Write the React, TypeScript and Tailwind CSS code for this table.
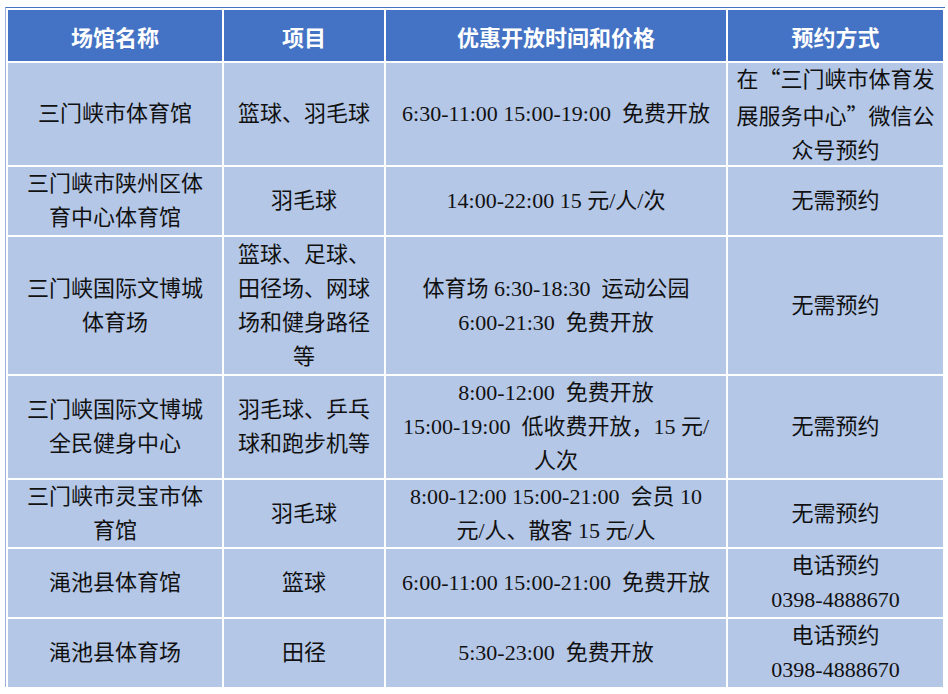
import React from "react";

const Q = ({ children }: { children: React.ReactNode }) => (
  <span className="font-['Noto_Sans_CJK_SC',sans-serif] [font-feature-settings:'fwid']">{children}</span>
);

const H = ({ children }: { children: React.ReactNode }) => (
  <div className="flex items-center justify-center bg-[#4472C4] text-white font-bold text-[22px] leading-[34px] font-['Noto_Sans_CJK_SC',sans-serif]">
    {children}
  </div>
);

const C = ({ lines }: { lines: React.ReactNode[] }) => (
  <div className="flex flex-col items-center justify-center bg-[#B4C7E7] text-[#111] text-[22px] leading-[34px] text-center whitespace-pre font-['Liberation_Serif','Noto_Sans_CJK_SC',serif]">
    {lines.map((l, i) => (
      <div key={i}>{l}</div>
    ))}
  </div>
);

export default function App() {
  return (
    <div className="w-[948px] h-[694px] bg-white pt-[7px] pl-[5px]">
      <div className="w-[940px] border-t border-l border-t-[#4472C4] border-l-[#9DB3DD] pt-[2px] pl-[2px] pr-[2px]">
        <div className="grid grid-cols-[214px_160px_340px_215px] grid-rows-[51px_102px_68px_137px_102px_67px_68px_68px] gap-[2px]">
          <H>场馆名称</H>
          <H>项目</H>
          <H>优惠开放时间和价格</H>
          <H>预约方式</H>

          <C lines={["三门峡市体育馆"]} />
          <C lines={["篮球、羽毛球"]} />
          <C lines={["6:30-11:00 15:00-19:00  免费开放"]} />
          <C
            lines={[
              <>在<Q>“</Q>三门峡市体育发</>,
              <>展服务中心<Q>”</Q>微信公</>,
              "众号预约",
            ]}
          />

          <C lines={["三门峡市陕州区体", "育中心体育馆"]} />
          <C lines={["羽毛球"]} />
          <C lines={["14:00-22:00 15 元/人/次"]} />
          <C lines={["无需预约"]} />

          <C lines={["三门峡国际文博城", "体育场"]} />
          <C lines={["篮球、足球、", "田径场、网球", "场和健身路径", "等"]} />
          <C lines={["体育场 6:30-18:30  运动公园", "6:00-21:30  免费开放"]} />
          <C lines={["无需预约"]} />

          <C lines={["三门峡国际文博城", "全民健身中心"]} />
          <C lines={["羽毛球、乒乓", "球和跑步机等"]} />
          <C lines={["8:00-12:00  免费开放", "15:00-19:00  低收费开放，15 元/", "人次"]} />
          <C lines={["无需预约"]} />

          <C lines={["三门峡市灵宝市体", "育馆"]} />
          <C lines={["羽毛球"]} />
          <C lines={["8:00-12:00 15:00-21:00  会员 10", "元/人、散客 15 元/人"]} />
          <C lines={["无需预约"]} />

          <C lines={["渑池县体育馆"]} />
          <C lines={["篮球"]} />
          <C lines={["6:00-11:00 15:00-21:00  免费开放"]} />
          <C lines={["电话预约", "0398-4888670"]} />

          <C lines={["渑池县体育场"]} />
          <C lines={["田径"]} />
          <C lines={["5:30-23:00  免费开放"]} />
          <C lines={["电话预约", "0398-4888670"]} />
        </div>
      </div>
    </div>
  );
}
